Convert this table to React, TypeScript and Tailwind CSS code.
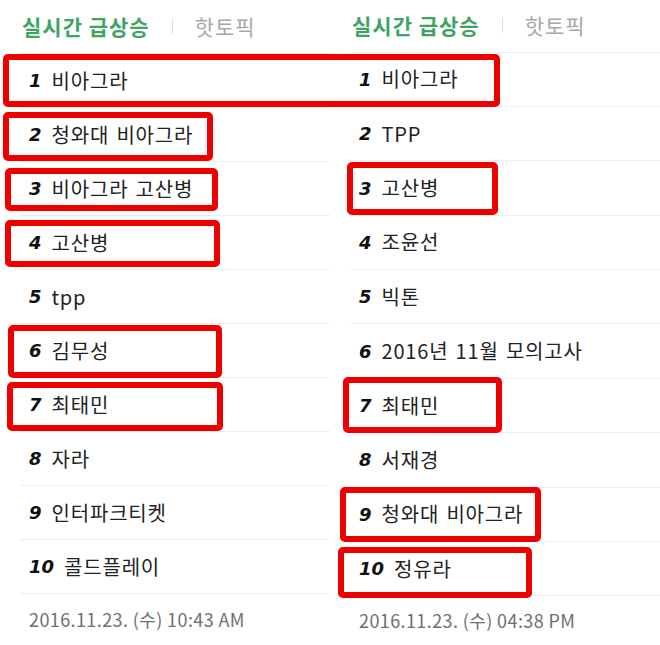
import React from "react";

const leftItems = [
  "비아그라",
  "청와대 비아그라",
  "비아그라 고산병",
  "고산병",
  "tpp",
  "김무성",
  "최태민",
  "자라",
  "인터파크티켓",
  "콜드플레이",
];

const rightItems = [
  "비아그라",
  "TPP",
  "고산병",
  "조윤선",
  "빅톤",
  "2016년 11월 모의고사",
  "최태민",
  "서재경",
  "청와대 비아그라",
  "정유라",
];

const KR = { fontFamily: '"Noto Sans CJK KR", "Noto Sans", sans-serif' };

function Header({ tall }: { tall: boolean }) {
  return (
    <div
      className={
        tall
          ? "h-[53px] flex items-center pl-[22px]"
          : "h-[52px] flex items-center pl-[22px]"
      }
    >
      <span className="text-[21px] font-bold text-[#3ea463] tracking-[1px]" style={KR}>
        실시간 급상승
      </span>
      <span className="mx-[22px] w-px h-[15px] bg-[#dddddd]" />
      <span className="text-[21px] text-[#a8a8a8] tracking-[1px]" style={KR}>
        핫토픽
      </span>
    </div>
  );
}

function Row({ rank, text, right }: { rank: number; text: string; right: boolean }) {
  return (
    <div
      className={
        right
          ? "ml-[20px] h-[54.6px] border-t border-[#ededed] flex items-center pl-[9px]"
          : "ml-[20px] h-[54px] border-t border-[#ededed] flex items-center pl-[9px]"
      }
    >
      <span
        className="text-[18px] font-bold italic text-[#111111] mr-[10px]"
        style={{ fontFamily: '"DejaVu Sans", sans-serif' }}
      >
        {rank}
      </span>
      <span className="text-[20px] text-[#222222] tracking-[0.8px] [word-spacing:2px]" style={KR}>
        {text}
      </span>
    </div>
  );
}

function Panel({ items, right, date }: { items: string[]; right: boolean; date: string }) {
  return (
    <div className="w-[330px] flex flex-col bg-white">
      <Header tall={!right} />
      {items.map((t, i) => (
        <Row key={i} rank={i + 1} text={t} right={right} />
      ))}
      <div
        className={
          right
            ? "ml-[20px] border-t border-[#ededed] h-[50px] flex items-center pl-[9px]"
            : "ml-[20px] border-t border-[#ededed] h-[52px] flex items-center pl-[9px]"
        }
      >
        <span className="text-[18px] text-[#6f6f6f] tracking-[0.4px]" style={KR}>
          {date}
        </span>
      </div>
    </div>
  );
}

export default function App() {
  const box = "absolute border-[6px] border-[#ee0000] rounded-[5px]";
  return (
    <div className="relative w-[660px] h-[645px] overflow-hidden bg-white flex">
      <Panel items={leftItems} right={false} date="2016.11.23. (수) 10:43 AM" />
      <Panel items={rightItems} right={true} date="2016.11.23. (수) 04:38 PM" />

      <div className={`${box} left-[3px] top-[54px] w-[497px] h-[53px]`} />
      <div className={`${box} left-[3px] top-[112px] w-[210px] h-[49px]`} />
      <div className={`${box} left-[5px] top-[168px] w-[213px] h-[43px]`} />
      <div className={`${box} left-[5px] top-[220px] w-[215px] h-[47px]`} />
      <div className={`${box} left-[8px] top-[325px] w-[214px] h-[53px]`} />
      <div className={`${box} left-[7px] top-[382px] w-[216px] h-[49px]`} />
      <div className={`${box} left-[347px] top-[162px] w-[151px] h-[53px]`} />
      <div className={`${box} left-[343px] top-[377px] w-[159px] h-[56px]`} />
      <div className={`${box} left-[340px] top-[487px] w-[201px] h-[55px]`} />
      <div className={`${box} left-[338px] top-[547px] w-[194px] h-[51px]`} />
    </div>
  );
}
